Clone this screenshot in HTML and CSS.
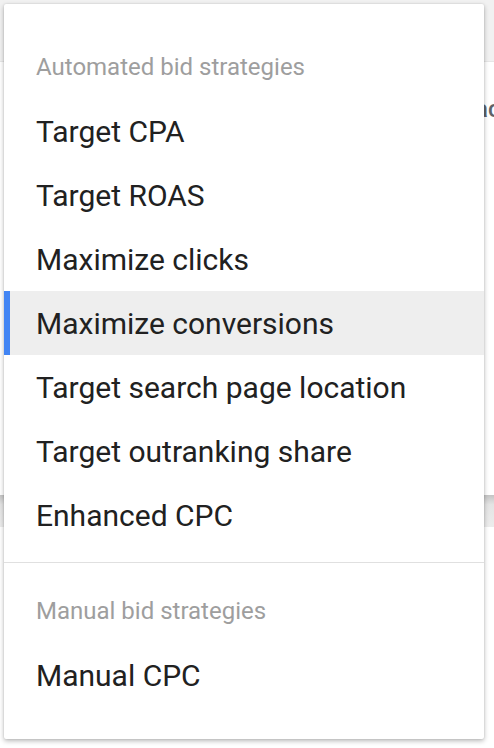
FILE: index.html
```html
<!DOCTYPE html>
<html lang="en">
<head>
    <meta charset="UTF-8">
    <meta name="viewport" content="width=device-width, initial-scale=1.0">
    <title>Bid strategy</title>
    <link rel="stylesheet" href="styles.css">
</head>
<body>
    <div class="page">
        <div class="topbar"></div>
        <div class="page-title">Reach</div>
        <div class="spacer"></div>
        <div class="table-head"></div>
    </div>

    <div class="menu">
        <div class="menu-group">
            <div class="menu-header">Automated bid strategies</div>
            <div class="menu-item">Target CPA</div>
            <div class="menu-item">Target ROAS</div>
            <div class="menu-item">Maximize clicks</div>
            <div class="menu-item selected">Maximize conversions</div>
            <div class="menu-item">Target search page location</div>
            <div class="menu-item">Target outranking share</div>
            <div class="menu-item">Enhanced CPC</div>
        </div>
        <div class="divider"></div>
        <div class="menu-group">
            <div class="menu-header">Manual bid strategies</div>
            <div class="menu-item">Manual CPC</div>
        </div>
    </div>
</body>
</html>
```

FILE: styles.css
```css
body {
    margin: 0;
    font-family: Roboto, "Noto Sans", Arial, sans-serif;
    background-color: #fff;
    overflow: hidden;
}

.page {
    display: flex;
    flex-direction: column;
    width: 494px;
    overflow: hidden;
}

.topbar {
    height: 61px;
    background-color: #f1f1f1;
    border-bottom: 1px solid #e6e6e6;
}

.page-title {
    padding: 33px 0 0 447px;
    font-size: 24px;
    font-weight: 500;
    color: #5f6368;
    white-space: nowrap;
}

.spacer {
    height: 372px;
}

.table-head {
    height: 32px;
    background: linear-gradient(#c4c4c4, #e4e4e4 30%, #ececec);
}

.menu {
    position: absolute;
    top: 4px;
    left: 4px;
    width: 480px;
    padding: 31px 0 32px;
    background-color: #fff;
    border-radius: 2px;
    box-shadow: 0 2px 5px rgba(0, 0, 0, 0.28), 0 0 2px rgba(0, 0, 0, 0.12);
}

.menu-header,
.menu-item {
    height: 64px;
    display: flex;
    align-items: center;
    padding-left: 32px;
    white-space: nowrap;
}

.menu-header {
    font-size: 24px;
    color: #9e9e9e;
}

.menu-item {
    font-size: 30px;
    color: #212121;
}

.menu-item.selected {
    background-color: #eeeeee;
    box-shadow: inset 6px 0 0 #4285f4;
}

.divider {
    height: 1px;
    margin: 15px 0 16px;
    background-color: #e0e0e0;
}
```
